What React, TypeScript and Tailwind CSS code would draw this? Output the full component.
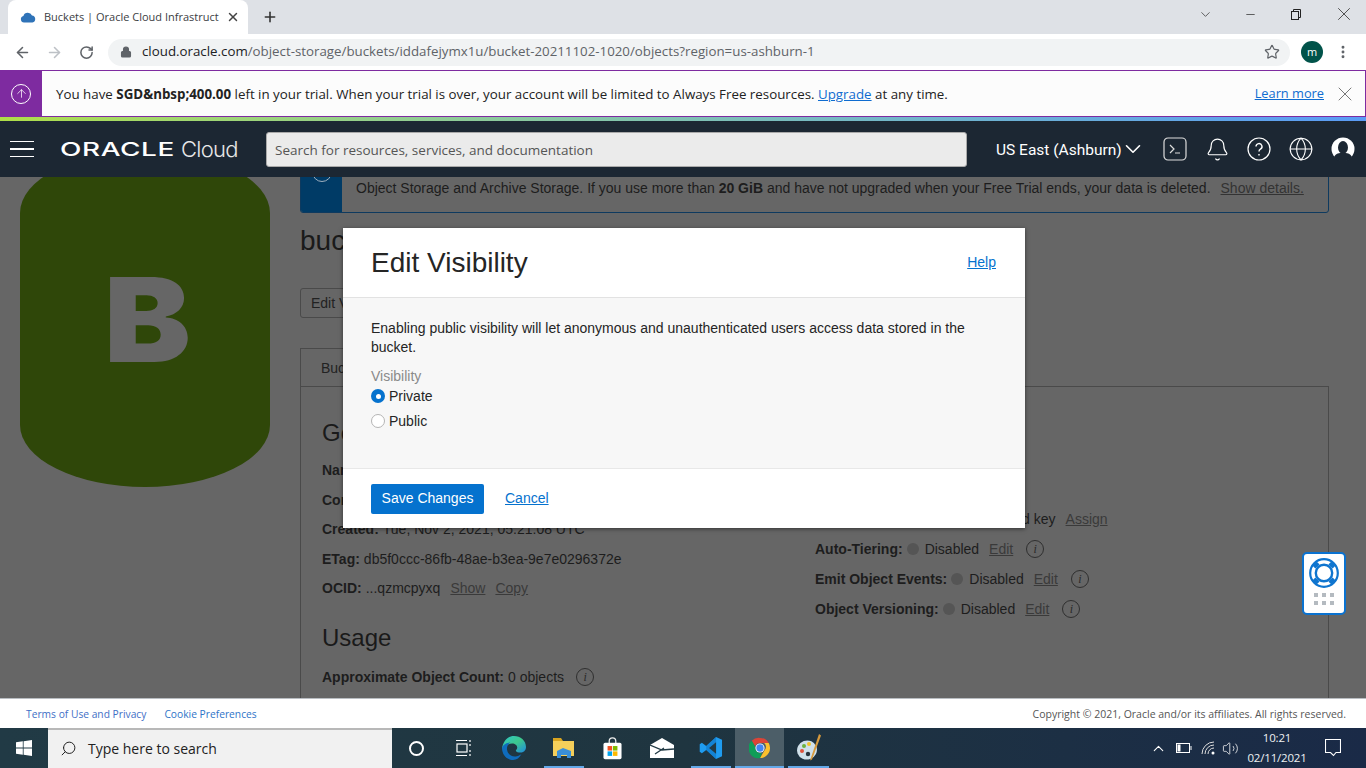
import React from "react";
import { ArrowLeft, ArrowRight, RotateCw, Lock, Star, X, Plus, ChevronDown, ChevronUp, Minus, EllipsisVertical, ArrowUp, Bell, Globe, Search, Volume2 } from "lucide-react";

const sans = { fontFamily: '"Liberation Sans", Arial, sans-serif' };

function InfoIcon() {
  return (
    <span className="inline-flex w-[18px] h-[18px] rounded-full border border-[#2f2f2f] items-center justify-center text-[12px] italic text-[#2a2a2a] font-['Liberation_Serif',serif] leading-none align-middle">
      i
    </span>
  );
}

function Dot() {
  return <span className="inline-block w-[12px] h-[12px] rounded-full bg-[#555555] align-[-1px]" />;
}

function Row({ label, tall, children }: { label: string; tall?: boolean; children?: React.ReactNode }) {
  return (
    <div className={(tall ? "h-[30px] " : "h-[29.5px] ") + "flex items-center whitespace-nowrap text-[14px] text-[#1d1d1d]"}>
      <b className="mr-1">{label}</b>
      {children}
    </div>
  );
}

function ChromeBar() {
  return (
    <>
      <div className="h-[34px] bg-[#dee1e6] flex items-start pl-2 relative font-['Open_Sans',sans-serif]">
        <div className="w-[240px] h-[34px] bg-white rounded-t-lg flex items-center pl-3 pr-2">
          <svg width="16" height="12" viewBox="0 0 16 12" className="shrink-0">
            <path d="M4 11.5a3.3 3.3 0 0 1-.6-6.5A4.6 4.6 0 0 1 12 4.6a3.5 3.5 0 0 1 .5 6.9z" fill="#2f73b8" />
          </svg>
          <span className="ml-2 text-[11px] text-[#3c4043] whitespace-nowrap">Buckets | Oracle Cloud Infrastruct</span>
          <X size={14} strokeWidth={2.5} className="ml-auto text-[#444]" />
        </div>
        <Plus size={16} strokeWidth={2.4} className="ml-[14px] mt-[9px] text-[#333]" />
        <div className="ml-auto flex items-center h-[28px] self-start text-[#333]">
          <ChevronDown size={15} strokeWidth={1.2} className="mr-[31px]" />
          <Minus size={13} strokeWidth={1.4} className="mr-[33px]" />
          <svg width="12" height="12" viewBox="0 0 12 12" fill="none" stroke="#222" className="mr-[31px]">
            <rect x="1.5" y="3.5" width="7" height="8" />
            <path d="M3.5 3.5v-2h7v8h-2" />
          </svg>
          <X size={22} strokeWidth={0.9} className="mr-[11px]" />
        </div>
      </div>
      <div className="h-[36px] bg-white flex items-center">
        <ArrowLeft size={17} strokeWidth={2.2} className="ml-[14px] text-[#5f6368]" />
        <ArrowRight size={17} strokeWidth={2.2} className="ml-[15px] text-[#bdc1c6]" />
        <RotateCw size={15} strokeWidth={2.4} className="ml-[16px] text-[#5f6368]" />
        <div className="ml-[14px] w-[1182px] h-[27px] rounded-full bg-[#f1f3f4] flex items-center pl-[12px] pr-[10px]">
          <Lock size={12} fill="#5f6368" strokeWidth={2.2} className="text-[#5f6368]" />
          <span className="ml-[10px] text-[13.3px] text-[#5f6368] font-['Open_Sans',sans-serif] whitespace-nowrap">
            <span className="text-[#202124]">cloud.oracle.com</span>/object-storage/buckets/iddafejymx1u/bucket-20211102-1020/objects?region=us-ashburn-1
          </span>
          <Star size={16} strokeWidth={1.8} className="ml-auto text-[#5f6368]" />
        </div>
        <div className="ml-[11px] w-[22px] h-[22px] rounded-full bg-[#01534a] text-white text-[11px] flex items-center justify-center font-['Open_Sans',sans-serif]">m</div>
        <EllipsisVertical size={16} strokeWidth={2.4} className="ml-[12px] text-[#5f6368]" />
      </div>
    </>
  );
}

function TrialBanner() {
  return (
    <>
      <div className="h-[47px] bg-[#fcfcfc] border-y border-r border-[#7e2ba0] flex items-center text-[13.33px] text-[#222] font-['Open_Sans',sans-serif]">
        <div className="w-[42px] h-full bg-[#7e2ba0] flex items-center justify-center shrink-0">
          <div className="w-[20px] h-[20px] rounded-full border border-white flex items-center justify-center">
            <ArrowUp size={13} strokeWidth={1.4} className="text-white" />
          </div>
        </div>
        <span className="ml-[14px] pt-[2px] whitespace-nowrap">
          You have <b>SGD&amp;nbsp;400.00</b> left in your trial. When your trial is over, your account will be limited to Always Free resources.{" "}
          <span className="text-[#0f6cd0] underline">Upgrade</span> at any time.
        </span>
        <span className="ml-auto text-[12.8px] text-[#0f6cd0] underline whitespace-nowrap">Learn more</span>
        <X size={24} strokeWidth={0.8} className="ml-[9px] mr-[8px] text-[#555]" />
      </div>
      <div className="h-[4px] bg-gradient-to-r from-[#aede47] to-[#5a9bf6]" />
    </>
  );
}

function NavBar() {
  return (
    <div className="h-[56px] bg-[#1c2733] flex items-center text-white shrink-0">
      <div className="ml-[10px] w-[24px] flex flex-col gap-[6px]">
        <div className="h-[1.5px] bg-white" />
        <div className="h-[1.5px] bg-white" />
        <div className="h-[1.5px] bg-white" />
      </div>
      <div className="ml-[26px] w-[180px] flex items-center whitespace-nowrap">
        <span className="inline-block w-[121px] pt-[1px] text-[19px] leading-[24px] font-medium tracking-[0.4px] scale-x-[1.47] origin-left font-['Inter',sans-serif]">ORACLE</span>
        <span className="text-[22px] leading-[28px] font-light text-[#e8e8e8] font-['Inter',sans-serif] tracking-[-0.7px]">Cloud</span>
      </div>
      <div className="ml-[26px] w-[701px] h-[35px] bg-[#ebebeb] rounded-[3px] border border-[#aaa] flex items-center pl-[8px] pt-[2px] text-[13.5px] text-[#555] font-['Open_Sans',sans-serif]">
        Search for resources, services, and documentation
      </div>
      <span className="ml-[29px] pt-[3px] text-[15.5px] font-['Roboto',sans-serif] whitespace-nowrap w-[124px]">US East (Ashburn)</span>
      <ChevronDown size={26} strokeWidth={1.5} />
      <svg width="24" height="24" viewBox="0 0 24 24" fill="none" stroke="#ddd" className="ml-[17px]">
        <rect x="1" y="1" width="22" height="22" rx="4" strokeWidth="1.2" />
        <path d="M7 8l4 4-4 4M12 16h5" strokeWidth="1.2" />
      </svg>
      <Bell size={25} strokeWidth={1.1} className="ml-[17.5px]" />
      <svg width="24" height="24" viewBox="0 0 24 24" fill="none" stroke="#fff" className="ml-[17.5px]">
        <circle cx="12" cy="12" r="11" strokeWidth="1.2" />
        <path d="M9 9.5a3 3 0 1 1 4.4 2.7c-1 .6-1.4 1.2-1.4 2.3M12 17v1.5" strokeWidth="1.4" />
      </svg>
      <Globe size={26} strokeWidth={1} className="ml-[17px]" />
      <svg width="24" height="24" viewBox="0 0 24 24" className="ml-[17px]">
        <circle cx="12" cy="12" r="11.5" fill="#fff" />
        <ellipse cx="12" cy="10.5" rx="5" ry="6.5" fill="#1c2733" />
        <path d="M3 20c2-4 5-4 9-4s7 0 9 4a11.5 11.5 0 0 1-18 0z" fill="#1c2733" />
      </svg>
    </div>
  );
}

function BackgroundPage() {
  return (
    <div className="flex-1 bg-[#666666] flex overflow-hidden" style={sans}>
      <div className="w-[300px] shrink-0 pl-[20px]">
        <div className="relative w-[250px] h-[336px] -mt-[26px]">
          <svg width="250" height="336" viewBox="0 0 250 336" className="block">
            <path d="M0 62A125 62 0 0 1 250 62V274A125 62 0 0 1 0 274z" fill="#2f4709" />
          </svg>
          <span className="absolute left-[84px] top-[102px] text-[117px] leading-[134px] font-black text-[#666666] font-['Inter',sans-serif] scale-x-[1.11] origin-left">B</span>
        </div>
      </div>
      <div className="w-[1029px] shrink-0 -mt-[20px]">
        <div className="h-[56px] border border-[#0e3a5f] rounded-[3px] flex overflow-hidden text-[14px] text-[#1d1d1d]">
          <div className="w-[41px] bg-[#003b66] flex justify-center shrink-0 pt-[4px]">
            <div className="w-[20px] h-[20px] rounded-full border border-[#9fb0bf]" />
          </div>
          <div className="pl-[14px] pt-[20px] whitespace-nowrap">
            Object Storage and Archive Storage. If you use more than <b>20 GiB</b> and have not upgraded when your Free Trial ends, your data is deleted.
            <span className="ml-[10px] underline text-[#333]">Show details.</span>
          </div>
        </div>
        <h1 className="mt-[12px] text-[28px] leading-[32px] text-[#1a1a1a]">bucket-20211102-1020</h1>
        <div className="mt-[31px] w-[110px] h-[30px] border border-[#4a4a4a] rounded-[3px] text-[14px] text-[#222] flex items-center pl-[10px]">Edit Visibility</div>
        <div className="mt-[30px] w-[140px] h-[38px] border-x border-t border-[#4a4a4a] text-[14px] text-[#222] pl-[20px] pt-[9px] whitespace-nowrap overflow-hidden">Bucket Information</div>
        <div className="border border-[#4a4a4a] h-[400px]">
          <div className="grid grid-cols-[493px_1fr] pl-[21px]">
            <div>
              <h2 className="mt-[30px] text-[24px] leading-[32px] text-[#1a1a1a]">General</h2>
              <div className="mt-[7px]">
                <Row label="Name:">bucket-20211102-1020</Row>
                <Row label="Compartment:">root</Row>
                <Row label="Created:">Tue, Nov 2, 2021, 05:21:08 UTC</Row>
                <Row label="ETag:">db5f0ccc-86fb-48ae-b3ea-9e7e0296372e</Row>
                <Row label="OCID:">
                  ...qzmcpyxq
                  <span className="ml-[10px] underline text-[#3a3a3a]">Show</span>
                  <span className="ml-[10px] underline text-[#3a3a3a]">Copy</span>
                </Row>
              </div>
              <h2 className="mt-[18px] text-[24px] leading-[32px] text-[#1a1a1a]">Usage</h2>
              <div className="mt-[9px]">
                <Row label="Approximate Object Count:">
                  0 objects
                  <span className="ml-[12px] flex"><InfoIcon /></span>
                </Row>
              </div>
            </div>
            <div className="pt-[117px]">
              <Row tall label="Encryption Key:">
                <span>Oracle managed key</span>
                <span className="ml-[10px] underline text-[#3a3a3a]">Assign</span>
              </Row>
              <Row tall label="Auto-Tiering:">
                <Dot /><span className="ml-[6px]">Disabled</span>
                <span className="ml-[10px] underline text-[#3a3a3a]">Edit</span>
                <span className="ml-[13px] flex"><InfoIcon /></span>
              </Row>
              <Row tall label="Emit Object Events:">
                <Dot /><span className="ml-[6px]">Disabled</span>
                <span className="ml-[10px] underline text-[#3a3a3a]">Edit</span>
                <span className="ml-[13px] flex"><InfoIcon /></span>
              </Row>
              <Row tall label="Object Versioning:">
                <Dot /><span className="ml-[6px]">Disabled</span>
                <span className="ml-[10px] underline text-[#3a3a3a]">Edit</span>
                <span className="ml-[13px] flex"><InfoIcon /></span>
              </Row>
            </div>
          </div>
        </div>
      </div>
    </div>
  );
}

function Modal() {
  return (
    <div className="absolute left-[343px] top-[228px] w-[682px] h-[300px] bg-white flex flex-col shadow-[0_1px_4px_rgba(0,0,0,0.5)] text-[14px] text-[#252525]" style={sans}>
      <div className="h-[70px] border-b border-[#e2e2e2] flex items-center pl-[28px] pr-[29px] shrink-0">
        <h2 className="text-[28px] text-[#252525]">Edit Visibility</h2>
        <span className="ml-auto text-[#0572ce] underline">Help</span>
      </div>
      <div className="flex-1 bg-[#f7f7f7] px-[28px] pt-[21px]">
        <p className="leading-[19px]">Enabling public visibility will let anonymous and unauthenticated users access data stored in the bucket.</p>
        <div className="mt-[9px] leading-[20px] text-[#8a8a8a]">Visibility</div>
        <div className="flex items-center h-[20px]">
          <span className="w-[14px] h-[14px] rounded-full bg-[#0572ce] flex items-center justify-center"><span className="w-[5px] h-[5px] rounded-full bg-white" /></span>
          <span className="ml-[4px]">Private</span>
        </div>
        <div className="mt-[5px] flex items-center h-[20px]">
          <span className="w-[14px] h-[14px] rounded-full bg-white border border-[#b5b5b5]" />
          <span className="ml-[4px]">Public</span>
        </div>
      </div>
      <div className="h-[60px] border-t border-[#e8e8e8] flex items-center px-[28px] shrink-0">
        <div className="w-[113px] h-[30px] bg-[#0572ce] rounded-[2px] text-white flex items-center justify-center">Save Changes</div>
        <span className="ml-[21px] text-[#0572ce] underline">Cancel</span>
      </div>
    </div>
  );
}

function HelpWidget() {
  return (
    <div className="absolute left-[1302px] top-[552px] w-[44px] h-[63px] bg-white border-2 border-[#0a72d0] rounded-[5px] flex flex-col items-center pt-[4px]">
      <svg width="30" height="30" viewBox="0 0 30 30" fill="none">
        <circle cx="15" cy="15" r="13.8" stroke="#0f75cf" strokeWidth="2.2" />
        <circle cx="15" cy="15" r="8.2" stroke="#0f75cf" strokeWidth="2.4" />
        <path d="M8.5 8.500L5 5M21.500 8.500L25 5M8.500 21.500L5 25M21.500 21.500L25 25" stroke="#0f75cf" strokeWidth="6" />
      </svg>
      <div className="mt-[5px] grid grid-cols-3 gap-x-[4px] gap-y-[4px]">
        {[0, 1, 2, 3, 4, 5].map((i) => (
          <span key={i} className="w-[4px] h-[4px] bg-[#b4bac0]" />
        ))}
      </div>
    </div>
  );
}

function Footer() {
  return (
    <div className="h-[30px] bg-white border-t border-[#b9bdc2] flex items-center pt-[2px] text-[10.5px] font-['Open_Sans',sans-serif] shrink-0">
      <span className="ml-[26px] text-[10.25px] text-[#3f6fc6]">Terms of Use and Privacy</span>
      <span className="ml-[18px] text-[10.25px] text-[#2e74c8]">Cookie Preferences</span>
      <span className="ml-auto mr-[20px] text-[#555]">Copyright © 2021, Oracle and/or its affiliates. All rights reserved.</span>
    </div>
  );
}

function TaskItem({ w = 48, active, bar, wide, children }: { w?: number; active?: boolean; bar?: boolean; wide?: boolean; children: React.ReactNode }) {
  return (
    <div className={"h-full flex items-center justify-center relative shrink-0 " + (active ? "bg-[#4c5e68]" : "")} style={{ width: w }}>
      {children}
      {bar && <span className={(wide ? "left-0 right-0 " : "left-[4px] right-[4px] ") + "absolute bottom-0 h-[2px] bg-[#63a8e8]"} />}
    </div>
  );
}

function Taskbar() {
  return (
    <div className="h-[40px] bg-gradient-to-r from-[#213a45] via-[#1f3540] to-[#1a2a47] flex items-center text-white font-['Open_Sans',sans-serif] shrink-0">
      <div className="w-[48px] flex justify-center">
        <svg width="16" height="16" viewBox="0 0 16 16" fill="#fff">
          <path d="M0 2.3l6.8-1v6.3H0zM7.6 1.2L16 0v7.6H7.6zM0 8.4h6.8v6.3l-6.8-1zM7.6 8.4H16V16l-8.4-1.2z" />
        </svg>
      </div>
      <div className="w-[344px] h-full bg-[#f1f1f1] border-t-2 border-[#b8b8b8] flex items-center pl-[12px] pb-[2px] text-[14px] text-[#222]">
        <Search size={17} strokeWidth={1.4} className="text-[#222] -scale-x-100" />
        <span className="ml-[11px]">Type here to search</span>
      </div>
      <TaskItem w={48}><span className="w-[15px] h-[15px] rounded-full border-[2.5px] border-white" /></TaskItem>
      <TaskItem w={48}>
        <svg width="18" height="18" viewBox="0 0 18 18" fill="none" stroke="#fff" strokeWidth="1.2">
          <path d="M1 1.5h11M1 16.5h11M15 1v2M15 5v2M15 11v2M15 15v2" />
          <rect x="2" y="5" width="10" height="8" />
        </svg>
      </TaskItem>
      <TaskItem w={52}>
        <svg width="24" height="24" viewBox="0 0 26 26">
          <defs>
            <linearGradient id="edgeA" x1="0" y1="0" x2="1" y2="1">
              <stop offset="0" stopColor="#2ec5c9" />
              <stop offset="0.5" stopColor="#3dc98c" />
              <stop offset="1" stopColor="#1f8ae0" />
            </linearGradient>
          </defs>
          <path d="M13 0c7 0 13 5 13 12 0 4-3 6-6 6-2 0-5-.7-5-2 0-1 1.500-1.500 1.500-3.500 0-2.500-2.500-4.500-5.500-4.500-4 0-7 3-11 6C1 6 6 0 13 0z" fill="url(#edgeA)" />
          <path d="M0 13c1-4 6-6 9-6-3 2-4 5-3.500 8 .6 5 5.500 8 10.500 7 2-.4 4-1.500 5-2.500-2 4-5 6.500-9 6.500C5 26 0 20 0 13z" fill="#0f6cbd" />
        </svg>
      </TaskItem>
      <TaskItem w={48} bar>
        <svg width="22" height="20" viewBox="0 0 22 20">
          <path d="M0 3h21v15H0z" fill="#f5cf5a" />
          <path d="M0 0h8l2 3H0z" fill="#d9a420" />
          <path d="M4 20v-7l6-3 8 3v7h-4v-3H8v3z" fill="#3a8fd8" />
        </svg>
      </TaskItem>
      <TaskItem w={48}>
        <svg width="23" height="23" viewBox="0 0 24 28">
          <path d="M8 9V5a4 4 0 0 1 8 0v4" fill="none" stroke="#eee" strokeWidth="1.5" />
          <rect x="1" y="7" width="22" height="20" rx="2" fill="#fff" />
          <rect x="6" y="11" width="5.500" height="5.500" fill="#f25022" />
          <rect x="12.500" y="11" width="5.500" height="5.500" fill="#7fba00" />
          <rect x="6" y="17.500" width="5.500" height="5.500" fill="#00a4ef" />
          <rect x="12.500" y="17.500" width="5.500" height="5.500" fill="#ffb900" />
        </svg>
      </TaskItem>
      <TaskItem w={51}>
        <svg width="24" height="20" viewBox="0 0 24 20">
          <path d="M0 7L12 0l12 7v13H0z" fill="#fff" />
          <path d="M0 7l12 5 12-1M5 16l9-6" fill="none" stroke="#213a45" strokeWidth="1.300" />
        </svg>
      </TaskItem>
      <TaskItem w={48} bar>
        <svg width="24" height="24" viewBox="0 0 100 100">
          <path d="M71 4l25 12v68L71 96 30 58 12 72 3 66V34l9-6 18 14z" fill="#1f9cf0" />
          <path d="M71 4v92L30 58V42z" fill="#0a6fc0" opacity="0.55" />
          <path d="M71 26v48L42 50z" fill="#213a45" />
        </svg>
      </TaskItem>
      <TaskItem w={49} active bar wide>
        <svg width="22" height="22" viewBox="0 0 48 48">
          <path d="M24 2a22 22 0 0 1 19 11H24a11 11 0 0 0-10.500 7.500L6 8A22 22 0 0 1 24 2z" fill="#db4437" />
          <path d="M43 13a22 22 0 0 1-19 33l10-17a11 11 0 0 0-1-16z" fill="#fbc02d" />
          <path d="M24 46A22 22 0 0 1 6 8l8 14a11 11 0 0 0 14 12.500z" fill="#0f9d58" />
          <circle cx="24" cy="24" r="10" fill="#fff" />
          <circle cx="24" cy="24" r="8" fill="#4285f4" />
        </svg>
      </TaskItem>
      <TaskItem w={49} bar>
        <svg width="24" height="30" viewBox="0 0 24 30">
          <ellipse cx="10" cy="17" rx="10" ry="9.500" fill="#cfe0ea" transform="rotate(-20 10 17)" />
          <circle cx="5" cy="18" r="2" fill="#e0533d" />
          <circle cx="7" cy="13" r="2" fill="#6cb23f" />
          <circle cx="12" cy="11" r="2" fill="#f3c22b" />
          <circle cx="11" cy="21" r="2.200" fill="#27333c" />
          <path d="M22 1l2 1.500-9 24-2 1z" fill="#d89a3c" />
        </svg>
      </TaskItem>
      <div className="ml-auto flex items-center h-full">
        <ChevronUp size={17} strokeWidth={1.5} />
        <svg width="16" height="12" viewBox="0 0 16 12" fill="none" stroke="#fff" className="ml-[9px]">
          <rect x="0.500" y="1.500" width="13" height="9" />
          <rect x="1.500" y="2.500" width="3" height="7" fill="#fff" stroke="none" />
          <path d="M15 4v4" />
        </svg>
        <svg width="14" height="14" viewBox="0 0 14 14" fill="none" stroke="#ddd" strokeWidth="1" className="ml-[9px]">
          <path d="M1 13A12 12 0 0 1 13 1M4 13A9 9 0 0 1 13 4M7 13a6 6 0 0 1 6-6" />
          <circle cx="12" cy="12" r="1.500" fill="#fff" stroke="none" />
        </svg>
        <Volume2 size={17} strokeWidth={1.1} className="ml-[7px]" />
        <div className="w-[58px] ml-[9px] mr-[5px] flex flex-col items-center text-[11.5px] leading-[20px] whitespace-nowrap text-[#eef1f3] tracking-[-0.2px]">
          <span>10:21</span>
          <span>02/11/2021</span>
        </div>
        <div className="w-[24px] flex justify-center mr-[21px] ml-[10px]">
          <svg width="16" height="18" viewBox="0 0 16 18" fill="none" stroke="#fff" strokeWidth="1.100">
            <path d="M.5.500h15v13h-4.500l-2.500 3-3-3H.5z" />
          </svg>
        </div>
      </div>
    </div>
  );
}

export default function App() {
  return (
    <div className="w-[1366px] h-[768px] relative overflow-hidden flex flex-col bg-white">
      <ChromeBar />
      <TrialBanner />
      <NavBar />
      <BackgroundPage />
      <Footer />
      <Taskbar />
      <Modal />
      <HelpWidget />
    </div>
  );
}
